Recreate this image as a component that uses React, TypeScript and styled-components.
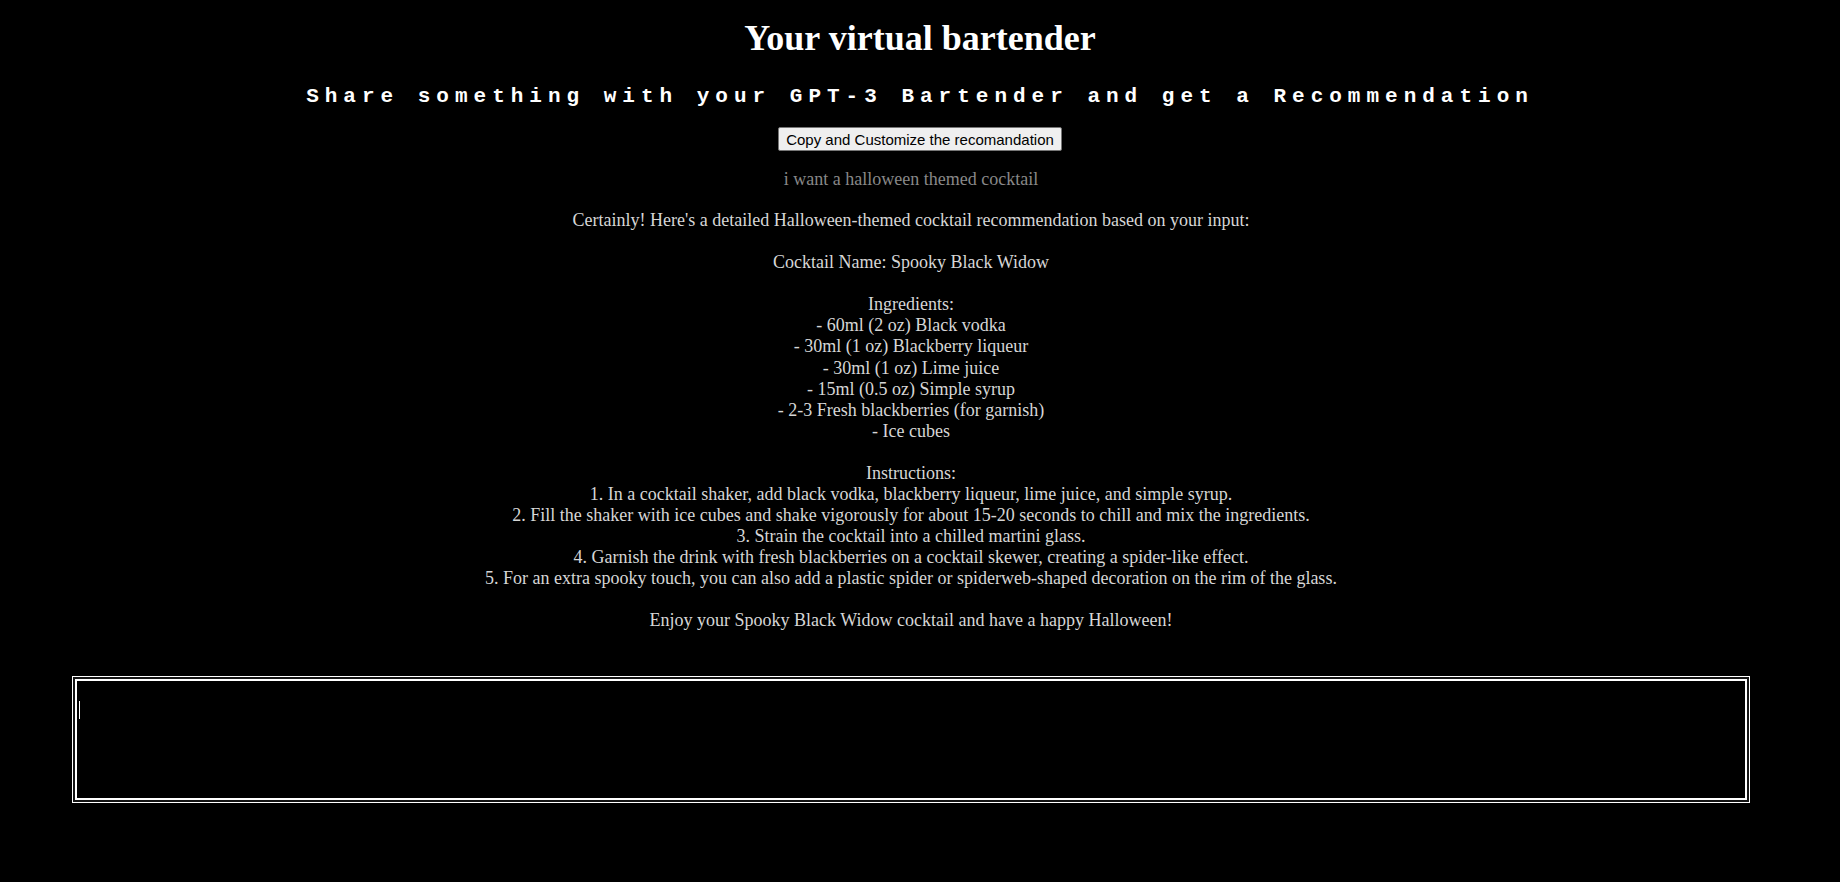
import React, { useState } from 'react';
import styled, { createGlobalStyle } from 'styled-components';

const GlobalStyle = createGlobalStyle`
  html,
  body {
    margin: 0;
    padding: 0;
    background: #000;
  }

  body {
    font-family: 'Liberation Serif', 'Times New Roman', serif;
    color: #fff;
  }
`;

const Page = styled.div`
  min-height: 882px;
  background: #000;
  padding-top: 18px;
  display: flex;
  flex-direction: column;
  align-items: center;
  text-align: center;
`;

const Title = styled.h1`
  margin: 0;
  font-size: 36px;
  line-height: 40px;
  font-weight: 700;
  color: #fff;
`;

const Subtitle = styled.h2`
  margin: 27px 0 0;
  font-family: 'Liberation Mono', 'DejaVu Sans Mono', monospace;
  font-size: 21px;
  line-height: 24px;
  font-weight: 700;
  letter-spacing: 6px;
  color: #fff;
`;

const CopyButton = styled.button`
  margin-top: 18px;
  height: 24px;
  padding: 0 7px;
  font-family: 'Liberation Sans', Arial, sans-serif;
  font-size: 15px;
  line-height: 17px;
  color: #000;
  background: #efefef;
  border: 1px solid #767676;
  border-radius: 2px;
  cursor: pointer;
`;

const Conversation = styled.div`
  padding-right: 18px;
  display: flex;
  flex-direction: column;
  align-items: center;
`;

const Query = styled.p`
  margin: 18px 0 0;
  font-size: 18px;
  line-height: 21.1px;
  color: #888;
`;

const Answer = styled.p`
  margin: 20px 0 0;
  font-size: 18px;
  line-height: 21.07px;
  color: #d6d6d6;
  white-space: pre-wrap;
`;

const Form = styled.form`
  align-self: stretch;
  margin-top: 47.5px;
  padding: 0 93px 0 75px;
`;

const Field = styled.div`
  position: relative;
`;

const Prompt = styled.textarea`
  display: block;
  box-sizing: border-box;
  width: 100%;
  height: 121px;
  padding: 20px 2px 2px;
  resize: none;
  font-family: 'Liberation Serif', serif;
  font-size: 16px;
  color: #fff;
  caret-color: #fff;
  background: #000;
  border: 2px solid #fff;
  border-radius: 0;
  outline: none;
  box-shadow: 0 0 0 2px #141414, 0 0 0 3px #fff;
`;

const Caret = styled.span`
  position: absolute;
  left: 4px;
  top: 22px;
  width: 1px;
  height: 18px;
  background: #fff;
  pointer-events: none;
`;

const answer = `Certainly! Here's a detailed Halloween-themed cocktail recommendation based on your input:

Cocktail Name: Spooky Black Widow

Ingredients:
- 60ml (2 oz) Black vodka
- 30ml (1 oz) Blackberry liqueur
- 30ml (1 oz) Lime juice
- 15ml (0.5 oz) Simple syrup
- 2-3 Fresh blackberries (for garnish)
- Ice cubes

Instructions:
1. In a cocktail shaker, add black vodka, blackberry liqueur, lime juice, and simple syrup.
2. Fill the shaker with ice cubes and shake vigorously for about 15-20 seconds to chill and mix the ingredients.
3. Strain the cocktail into a chilled martini glass.
4. Garnish the drink with fresh blackberries on a cocktail skewer, creating a spider-like effect.
5. For an extra spooky touch, you can also add a plastic spider or spiderweb-shaped decoration on the rim of the glass.

Enjoy your Spooky Black Widow cocktail and have a happy Halloween!`;

export default function App() {
  const [text, setText] = useState('');

  return (
    <>
      <GlobalStyle />
      <Page>
        <Title>Your virtual bartender</Title>
        <Subtitle>Share something with your GPT-3 Bartender and get a Recommendation</Subtitle>
        <CopyButton type="button">Copy and Customize the recomandation</CopyButton>
        <Conversation>
          <Query>i want a halloween themed cocktail</Query>
          <Answer>{answer}</Answer>
        </Conversation>
        <Form onSubmit={(e) => e.preventDefault()}>
          <Field>
            <Prompt value={text} onChange={(e) => setText(e.target.value)} />
            {text === '' && <Caret />}
          </Field>
        </Form>
      </Page>
    </>
  );
}
